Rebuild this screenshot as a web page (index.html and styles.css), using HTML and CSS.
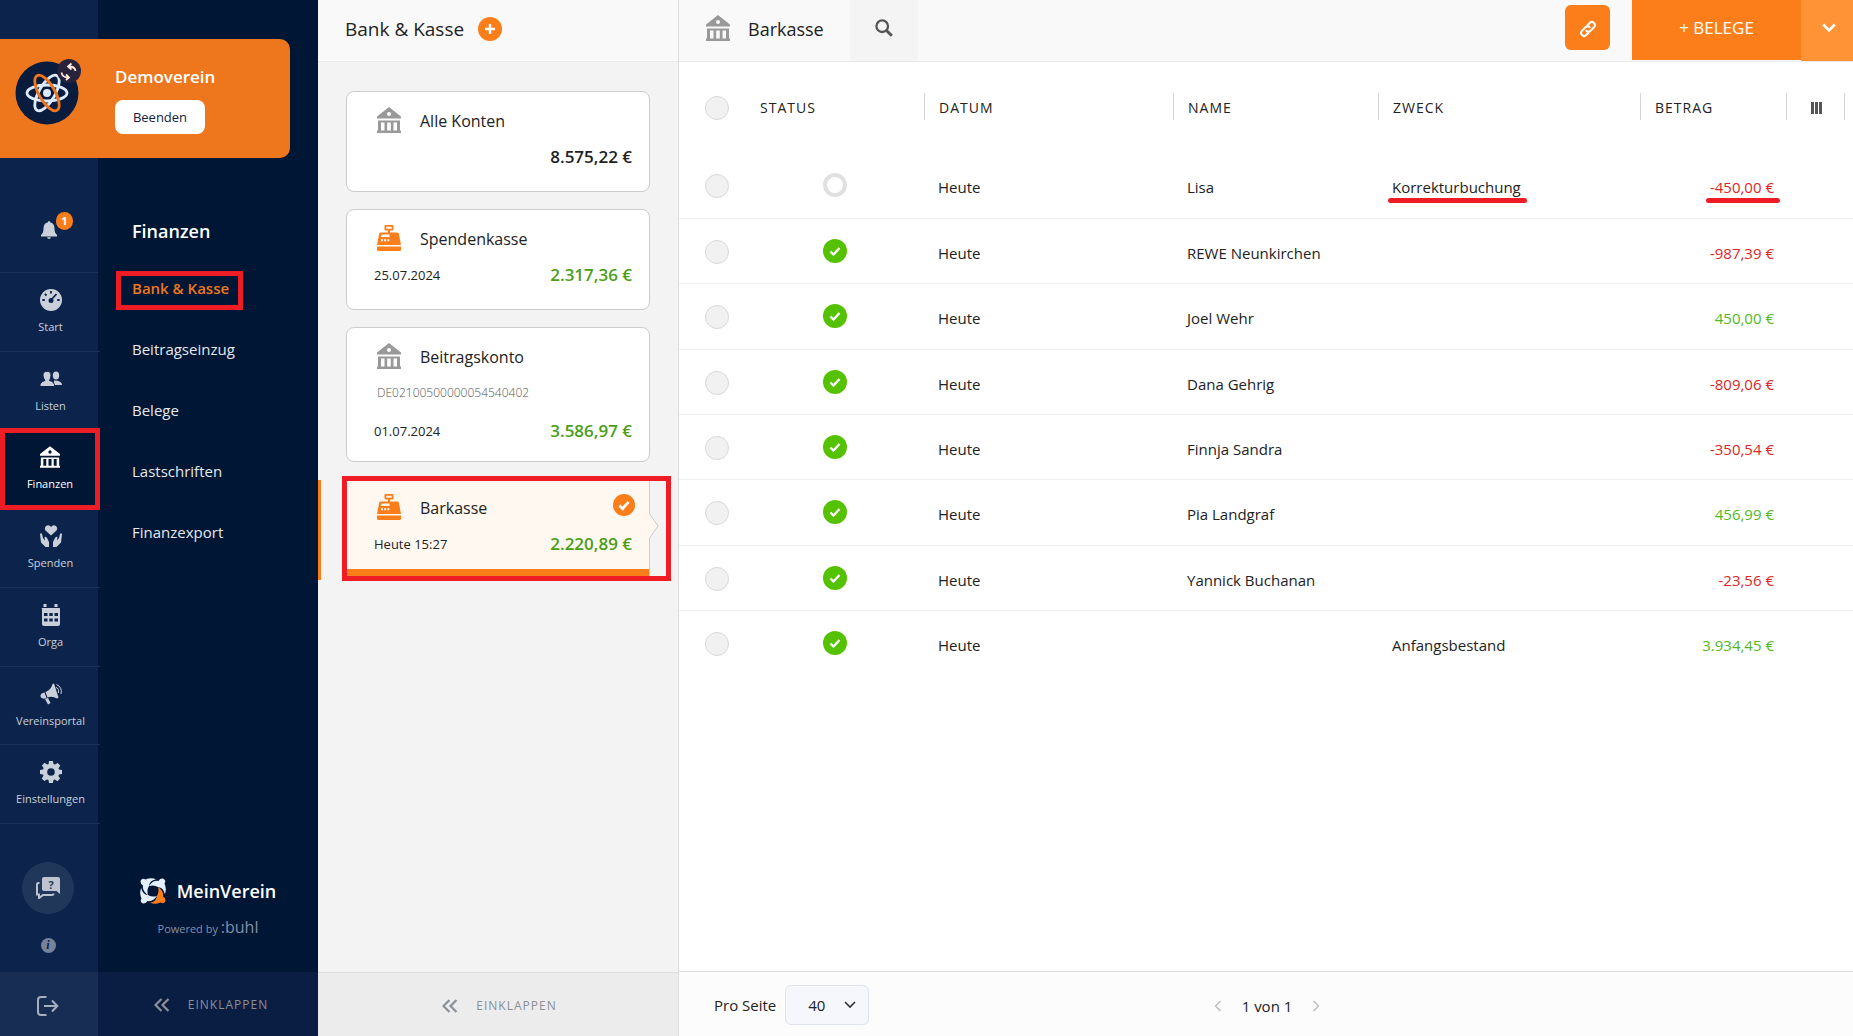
FILE: index.html
```html
<!DOCTYPE html>
<html lang="de">
<head>
<meta charset="utf-8">
<title>MeinVerein – Bank &amp; Kasse</title>
<link rel="stylesheet" href="styles.css">
</head>
<body>
<svg class="sprite" aria-hidden="true">
  <symbol id="bank" viewBox="0 0 24 26">
    <path fill-rule="evenodd" d="M12 0 24 9.500V11.500H0V9.500ZM12 5A2 2 0 1 0 12 9A2 2 0 1 0 12 5Z"/>
    <path d="M1 13.500H23V15.500H1ZM1 15H4V24H1ZM7.500 15H10.200V24H7.500ZM13.800 15H16.500V24H13.800ZM20 15H23V24H20ZM0 23.500H24V26H0Z"/>
  </symbol>
  <symbol id="register" viewBox="0 0 24 26">
    <path fill-rule="evenodd" d="M8.500 0H15.500Q16.500 0 16.500 1V4.500Q16.500 5.500 15.500 5.500H13V7.500H20.500Q21.500 7.500 21.800 8.500L24 20H0L2.200 8.500Q2.500 7.500 3.500 7.500H11V5.500H8.500Q7.500 5.500 7.500 4.500V1Q7.500 0 8.500 0ZM9.300 1.700V3.800H14.700V1.700ZM4.500 9.500 4 12H12.500V9.500ZM4 14.300V16.300H6V14.300ZM7.200 14.300V16.300H9.200V14.300ZM10.400 14.300V16.300H12.400V14.300Z"/>
    <path d="M0 21.500H24V24.500Q24 26 22.500 26H1.500Q0 26 0 24.500Z"/>
  </symbol>
  <symbol id="check" viewBox="0 0 24 24">
    <circle cx="12" cy="12" r="12"/>
    <path d="M7 12.500 10.500 16 17 8.500" fill="none" stroke="#fff" stroke-width="3"/>
  </symbol>
  <symbol id="ok" viewBox="0 0 24 24">
    <circle cx="12" cy="12" r="12"/>
    <path d="M7.500 12.500 10.500 15.500 16.500 9" fill="none" stroke="#fff" stroke-width="2.400"/>
  </symbol>
  <symbol id="collapse" viewBox="0 0 16 14">
    <path d="M7.500 1 1.500 7 7.500 13M14.500 1 8.500 7 14.500 13" fill="none" stroke="currentColor" stroke-width="2.200"/>
  </symbol>
</svg>

<div class="app">
  <aside class="sidebar">
    <div class="club">
      <div class="club-logo">
        <svg viewBox="0 0 64 64" width="64" height="64">
          <circle cx="32" cy="32" r="31.500" fill="#0a1c3e"/>
          <g fill="none" stroke-width="2.800">
            <ellipse cx="32" cy="32" rx="8" ry="20" transform="rotate(30 32 32)" stroke="#dcebff"/>
            <ellipse cx="32" cy="32" rx="20" ry="8" stroke="#dcebff"/>
            <ellipse cx="32" cy="32" rx="8" ry="20" transform="rotate(-30 32 32)" stroke="#ee761c"/>
          </g>
          <circle cx="32" cy="32" r="4" fill="#dcebff"/>
        </svg>
        <svg class="swap" viewBox="0 0 24 24" width="24" height="24">
          <circle cx="12" cy="12" r="12" fill="#26233a"/>
          <path d="M18.500 12Q18 7.500 12 7.500M14.500 4.500 11 7.500 14.500 10.500M4.500 13.500Q5 18.500 11.500 18.500M9 15.500 12 18.500 9 21" fill="none" stroke="#ffe9dc" stroke-width="1.800"/>
        </svg>
      </div>
      <div class="club-info">
        <strong>Demoverein</strong>
        <button type="button">Beenden</button>
      </div>
    </div>

    <nav class="rail" aria-label="Hauptnavigation">
      <a class="bell" href="#" aria-label="Benachrichtigungen">
        <svg viewBox="0 0 18 18" width="18" height="18"><path d="M9 0Q10 0 10 1.200Q14.500 2.200 14.500 7.500Q14.500 12 17 14V15.500H1V14Q3.500 12 3.500 7.500Q3.500 2.200 8 1.200Q8 0 9 0ZM7 16.300H11Q10.500 18 9 18Q7.500 18 7 16.300Z"/></svg>
        <span class="badge">1</span>
      </a>
      <div class="rail-items">
        <a href="#"><svg viewBox="0 0 22 22" width="22" height="22"><circle cx="11" cy="11" r="11"/><g stroke="#0c244b" stroke-width="1.800"><path d="M11 11 16.500 5M11 2V4.500M4.800 4.800 6.500 6.500M2.300 11H4.800M17.200 11H19.700"/><circle cx="11" cy="11.500" r="1.600" fill="#0c244b"/></g></svg>Start</a>
        <a href="#"><svg viewBox="0 0 22 22" width="22" height="22"><ellipse cx="16" cy="7.500" rx="3.200" ry="4"/><path d="M14 12.500Q22 12.500 22 17H14Z"/><g stroke="#0c244b" stroke-width="1"><path d="M0 18.500Q-.5 14 5 12.500Q3 10 3 7.500Q3 3.300 7 3.300Q11 3.300 11 7.500Q11 10 9.500 12.500Q15 14 14.500 18.500Z"/></g></svg>Listen</a>
        <a href="#" class="active"><svg width="20" height="22"><use href="#bank"/></svg>Finanzen</a>
        <a href="#"><svg viewBox="0 0 22 22" width="22" height="22"><path d="M11 10.500 5.500 5.500Q4 3 6 1Q9-1 11 2Q13-1 16 1Q18 3 16.500 5.500ZM0 9Q1 7.500 2 9L3 13 5 15.500 4.500 12.500Q5.500 11 7 13L9 17V22H5.500L1 17.500ZM22 9Q21 7.500 20 9L19 13 17 15.500 17.500 12.500Q16.500 11 15 13L13 17V22H16.500L21 17.500Z"/></svg>Spenden</a>
        <a href="#"><svg viewBox="0 0 22 22" width="22" height="22"><path fill-rule="evenodd" d="M3.500 0H6.500V3H3.500ZM14.500 0H17.500V3H14.500ZM1.500 4H19.500Q20 4 20 5V20Q20 22 18 22H4Q2 22 2 20V5ZM4 9V12H7.500V9ZM9.300 9V12H12.700V9ZM14.500 9V12H18V9ZM4 14.500V17.500H7.500V14.500ZM9.300 14.500V17.500H12.700V14.500ZM14.500 14.500V17.500H18V14.500Z"/></svg>Orga</a>
        <a href="#"><svg viewBox="0 0 22 22" width="22" height="22"><path d="M5.500 9Q11 7 12.500 1L14 .5 18.500 14.500 17 15.500Q12 12.500 7.500 14.500ZM4.500 9.500 6.500 15Q3 16.500 1 14.500Q-1 11 4.500 9.500ZM5 16 8 15 10.500 20 8 21.500Z"/><path d="M16 4.500Q19 5 18.500 10M16.500 1.500Q22.500 4 21 11" fill="none" stroke="#c9d0da" stroke-width="1"/></svg>Vereinsportal</a>
        <a href="#"><svg viewBox="0 0 22 22" width="22" height="22"><path fill-rule="evenodd" d="M9 0H13L13.500 3 15 3.600 17.600 1.900 20.300 4.600 18.500 7.200 19 8.600 22 9V13L19 13.500 18.400 15 20.100 17.600 17.400 20.300 14.800 18.500 13.400 19 13 22H9L8.500 19 7 18.400 4.400 20.100 1.700 17.400 3.500 14.800 3 13.400 0 13V9L3 8.500 3.600 7 1.900 4.400 4.600 1.700 7.200 3.500 8.600 3ZM11 7.200A3.800 3.800 0 1 0 11 14.800A3.800 3.800 0 1 0 11 7.200Z"/></svg>Einstellungen</a>
      </div>
      <div class="rail-help">
        <a class="chat" href="#" aria-label="Hilfe"><svg viewBox="0 0 24 22" width="24" height="22"><path d="M8 0H22Q24 0 24 2V17L20.500 14H8Q6 14 6 12V2Q6 0 8 0Z"/><path d="M3.500 6H2.500Q1 6 1 7.500V17.500H3V21L7 18H15.500Q17.500 18 17.500 16.500" fill="none" stroke="#bcc4d2" stroke-width="2"/><text x="15" y="12" text-anchor="middle" class="q">?</text></svg></a>
        <a class="info" href="#" aria-label="Info"><span>i</span></a>
      </div>
      <a class="logout" href="#" aria-label="Abmelden"><svg viewBox="0 0 22 20" width="22" height="20"><path d="M9.500 1H4Q1 1 1 4V16Q1 19 4 19H9.500M7 10H20M15 4.500 20.300 10 15 15.500" fill="none" stroke="#a6afbd" stroke-width="2"/></svg></a>
    </nav>

    <nav class="subnav" aria-label="Finanzen">
      <h2>Finanzen</h2>
      <a href="#" class="current">Bank &amp; Kasse</a>
      <a href="#">Beitragseinzug</a>
      <a href="#">Belege</a>
      <a href="#">Lastschriften</a>
      <a href="#">Finanzexport</a>
      <div class="brand">
        <div class="brand-name">
          <svg viewBox="0 0 26 26" width="26" height="26"><path id="arm" d="M18 9Q24 13 23 18.500Q26 20 25.300 23.500Q23.500 26.500 20.500 24.500Q15 27 10 24.800Q16.500 23.500 17 18Q19.500 14 18 9Z" fill="#fc7e1b"/><g fill="#e4f0ff"><path d="M18 9Q24 13 23 18.500Q26 20 25.300 23.500Q23.500 26.500 20.500 24.500Q15 27 10 24.800Q16.500 23.500 17 18Q19.500 14 18 9Z" transform="rotate(90 13 13)"/><path d="M18 9Q24 13 23 18.500Q26 20 25.300 23.500Q23.500 26.500 20.500 24.500Q15 27 10 24.800Q16.500 23.500 17 18Q19.500 14 18 9Z" transform="rotate(180 13 13)"/><path d="M18 9Q24 13 23 18.500Q26 20 25.300 23.500Q23.500 26.500 20.500 24.500Q15 27 10 24.800Q16.500 23.500 17 18Q19.500 14 18 9Z" transform="rotate(270 13 13)"/></g></svg>
          <span>MeinVerein</span>
        </div>
        <div class="powered">Powered by <span>:buhl</span></div>
      </div>
      <button type="button" class="collapse"><svg width="16" height="14"><use href="#collapse"/></svg>EINKLAPPEN</button>
    </nav>
  </aside>

  <section class="accounts">
    <header class="bar">
      <h1>Bank &amp; Kasse</h1>
      <button type="button" class="add" aria-label="Konto hinzufügen"><svg viewBox="0 0 24 24" width="24" height="24"><circle cx="12" cy="12" r="12" fill="#fc7e1b"/><path d="M12 7V17M7 12H17" stroke="#fff" stroke-width="2.400"/></svg></button>
    </header>
    <div class="cards">
      <article class="card">
        <div class="card-head"><svg class="grey" width="24" height="26"><use href="#bank"/></svg><h3>Alle Konten</h3></div>
        <div class="card-foot"><span></span><b>8.575,22 €</b></div>
      </article>
      <article class="card">
        <div class="card-head"><svg class="orange" width="24" height="26"><use href="#register"/></svg><h3>Spendenkasse</h3></div>
        <div class="card-foot"><span>25.07.2024</span><b class="plus">2.317,36 €</b></div>
      </article>
      <article class="card with-iban">
        <div class="card-head"><svg class="grey" width="24" height="26"><use href="#bank"/></svg><h3>Beitragskonto</h3></div>
        <div class="iban">DE02100500000054540402</div>
        <div class="card-foot"><span>01.07.2024</span><b class="plus">3.586,97 €</b></div>
      </article>
      <article class="card selected">
        <div class="card-head"><svg class="orange" width="24" height="26"><use href="#register"/></svg><h3>Barkasse</h3><svg class="orange tick" width="22" height="22"><use href="#check"/></svg></div>
        <div class="card-foot"><span>Heute 15:27</span><b class="plus">2.220,89 €</b></div>
        <svg class="pointer" viewBox="0 0 10 26" width="10" height="26"><path d="M0 0 9 13 0 26" fill="#fff8f1" stroke="#ccc"/></svg>
      </article>
    </div>
    <button type="button" class="collapse"><svg width="16" height="14"><use href="#collapse"/></svg>EINKLAPPEN</button>
  </section>

  <main class="bookings">
    <header class="bar">
      <svg class="grey" width="24" height="26"><use href="#bank"/></svg>
      <h2>Barkasse</h2>
      <button type="button" class="search" aria-label="Suchen"><svg viewBox="0 0 18 18" width="18" height="18"><circle cx="7.200" cy="7.200" r="5.800" fill="none" stroke="#555" stroke-width="2.300"/><path d="M11.500 11.500 16.800 16.800" stroke="#555" stroke-width="3"/></svg></button>
      <button type="button" class="link" aria-label="Verknüpfen"><svg viewBox="0 0 20 20" width="20" height="20"><g transform="rotate(-45 10 10)" fill="none" stroke="#fff" stroke-width="2" stroke-linecap="round"><path d="M8 13H4.500A3 3 0 0 1 4.500 7H10A3 3 0 0 1 12.500 10"/><path d="M12 7H15.500A3 3 0 0 1 15.500 13H10A3 3 0 0 1 7.500 10"/></g></svg></button>
      <button type="button" class="belege">+ BELEGE</button>
      <button type="button" class="more" aria-label="Weitere Aktionen"><svg viewBox="0 0 14 10" width="14" height="10"><path d="M1.200 1.500 7 7.500 12.800 1.500" fill="none" stroke="#fff" stroke-width="2.600"/></svg></button>
    </header>

    <div class="table-area">
      <table>
        <colgroup><col class="c-pick"><col class="c-status"><col class="c-date"><col class="c-name"><col class="c-use"><col class="c-sum"><col class="c-cols"><col class="c-end"></colgroup>
        <thead>
          <tr><th><input type="checkbox" aria-label="Alle auswählen"></th><th>STATUS</th><th>DATUM</th><th>NAME</th><th>ZWECK</th><th>BETRAG</th><th><button type="button" class="cols" aria-label="Spalten"><svg viewBox="0 0 11 12" width="11" height="12"><path d="M0 0H3V12H0ZM4 0H7V12H4ZM8 0H11V12H8Z" fill="#555"/></svg></button></th><th></th></tr>
        </thead>
        <tbody>
          <tr><td><input type="checkbox" aria-label="Lisa"></td><td><svg class="open" viewBox="0 0 24 24" width="24" height="24"><circle cx="12" cy="12" r="10"/></svg></td><td>Heute</td><td>Lisa</td><td><span class="mark">Korrekturbuchung</span></td><td class="minus"><span class="mark">-450,00 €</span></td><td></td><td></td></tr>
          <tr><td><input type="checkbox" aria-label="REWE Neunkirchen"></td><td><svg class="ok" width="24" height="24"><use href="#ok"/></svg></td><td>Heute</td><td>REWE Neunkirchen</td><td></td><td class="minus">-987,39 €</td><td></td><td></td></tr>
          <tr><td><input type="checkbox" aria-label="Joel Wehr"></td><td><svg class="ok" width="24" height="24"><use href="#ok"/></svg></td><td>Heute</td><td>Joel Wehr</td><td></td><td class="gain">450,00 €</td><td></td><td></td></tr>
          <tr><td><input type="checkbox" aria-label="Dana Gehrig"></td><td><svg class="ok" width="24" height="24"><use href="#ok"/></svg></td><td>Heute</td><td>Dana Gehrig</td><td></td><td class="minus">-809,06 €</td><td></td><td></td></tr>
          <tr><td><input type="checkbox" aria-label="Finnja Sandra"></td><td><svg class="ok" width="24" height="24"><use href="#ok"/></svg></td><td>Heute</td><td>Finnja Sandra</td><td></td><td class="minus">-350,54 €</td><td></td><td></td></tr>
          <tr><td><input type="checkbox" aria-label="Pia Landgraf"></td><td><svg class="ok" width="24" height="24"><use href="#ok"/></svg></td><td>Heute</td><td>Pia Landgraf</td><td></td><td class="gain">456,99 €</td><td></td><td></td></tr>
          <tr><td><input type="checkbox" aria-label="Yannick Buchanan"></td><td><svg class="ok" width="24" height="24"><use href="#ok"/></svg></td><td>Heute</td><td>Yannick Buchanan</td><td></td><td class="minus">-23,56 €</td><td></td><td></td></tr>
          <tr><td><input type="checkbox" aria-label="Anfangsbestand"></td><td><svg class="ok" width="24" height="24"><use href="#ok"/></svg></td><td>Heute</td><td></td><td>Anfangsbestand</td><td class="gain">3.934,45 €</td><td></td><td></td></tr>
        </tbody>
      </table>
    </div>

    <footer class="pager">
      <div class="per-page">
        <label for="size">Pro Seite</label>
        <div class="select"><select id="size"><option>40</option></select><svg viewBox="0 0 12 8" width="12" height="8"><path d="M1 1 6 6 11 1" fill="none" stroke="#333" stroke-width="1.600"/></svg></div>
      </div>
      <div class="pages">
        <button type="button" aria-label="Zurück"><svg viewBox="0 0 8 12" width="8" height="12"><path d="M6.500 1 1.500 6 6.500 11" fill="none" stroke="#bbb" stroke-width="1.400"/></svg></button>
        <span>1 von 1</span>
        <button type="button" aria-label="Weiter"><svg viewBox="0 0 8 12" width="8" height="12"><path d="M1.500 1 6.500 6 1.500 11" fill="none" stroke="#bbb" stroke-width="1.400"/></svg></button>
      </div>
      <span></span>
    </footer>
  </main>
</div>
</body>
</html>
```
FILE: styles.css
```css
* { box-sizing: border-box; }

body {
  margin: 0;
  font-family: "Open Sans", "Noto Sans", sans-serif;
  font-size: 15px;
  line-height: 20px;
  color: #222;
}

h1, h2, h3 { margin: 0; font-weight: 500; }
a { color: inherit; text-decoration: none; }
button { font: inherit; color: inherit; border: 0; padding: 0; background: none; cursor: pointer; }
svg { display: block; flex: none; fill: currentColor; }
.sprite { position: absolute; width: 0; height: 0; }
.grey { color: #999; }
.orange { color: #fc7e1b; }

.app {
  display: grid;
  grid-template-columns: 318px 361px minmax(0, 1fr);
  min-height: 100vh;
}

/* Sidebar */
.sidebar {
  position: relative;
  display: grid;
  grid-template-columns: 98px 1fr;
  color: #e6e8ec;
  background: #001635;
}

.club {
  position: absolute;
  top: 39px;
  left: 0;
  display: flex;
  gap: 36px;
  width: 290px;
  height: 119px;
  padding: 22px 15px;
  border-radius: 0 10px 10px 0;
  background: #ee761c;
}
.club-logo { position: relative; }
.swap { position: absolute; top: -2px; left: 42px; }
.club-info { display: flex; flex-direction: column; align-items: flex-start; gap: 13px; padding-top: 5px; }
.club strong { font-size: 17px; line-height: 21px; font-weight: 600; color: #fff; }
.club button {
  width: 90px;
  height: 34px;
  border-radius: 8px;
  background: #fff;
  color: #14213c;
  font-size: 13px;
  font-weight: 500;
}

.rail { display: flex; flex-direction: column; background: #0c244b; color: #c9d0da; }
.bell {
  position: relative;
  display: flex;
  align-items: flex-end;
  justify-content: center;
  height: 273px;
  padding-bottom: 33px;
  border-bottom: 1px solid #1a3258;
}
.badge {
  position: absolute;
  left: 56px;
  top: 212px;
  width: 17px;
  height: 18px;
  border-radius: 9px;
  background: #fc7e1b;
  color: #fff;
  font-size: 11px;
  line-height: 18px;
  font-weight: 700;
  text-align: center;
}
.rail-items { display: grid; grid-auto-rows: 1fr; height: 551px; }
.rail-items a {
  display: flex;
  flex-direction: column;
  align-items: center;
  gap: 8px;
  padding: 16px 0 0 1px;
  border-bottom: 1px solid #1a3258;
  font-size: 11px;
  line-height: 16px;
}
.rail-items .active {
  width: 100px;
  margin-top: -2px;
  margin-bottom: -1px;
  padding: 13px 0 0;
  border: 5px solid #ee1c24;
  background: #001635;
  color: #fff;
  z-index: 1;
}
.rail-help { display: flex; flex-direction: column; align-items: center; gap: 24px; margin-top: auto; padding: 0 2px 19px 0; }
.chat { display: flex; align-items: center; justify-content: center; width: 52px; height: 52px; border-radius: 50%; background: #21375a; color: #bcc4d2; }
.q { font-size: 11px; font-weight: 700; fill: #21375a; }
.info { width: 15px; height: 15px; border-radius: 50%; background: #75839b; color: #0c244b; font: italic 700 12px/15px "Liberation Serif", serif; text-align: center; }
.logout { display: flex; align-items: center; justify-content: center; height: 64px; padding: 3px 2px 0 0; background: #182d54; }

.subnav { display: flex; flex-direction: column; padding-top: 220px; font-size: 15px; }
.subnav h2 { margin: 0 0 29px 34px; font-size: 18px; line-height: 22px; font-weight: 600; color: #fff; }
.subnav > a { align-self: flex-start; margin: 0 18px 22px; padding: 3px 9px 7px 11px; border: 5px solid transparent; line-height: 19px; font-weight: 500; }
.subnav > .current { border-color: #ee1c24; color: #ee761c; font-weight: 600; }
.brand { margin: auto 0 33px; display: flex; flex-direction: column; align-items: center; gap: 12px; }
.brand-name { display: flex; align-items: center; gap: 11px; color: #fff; font-size: 18px; line-height: 28px; font-weight: 600; }
.powered { font-size: 11px; line-height: 20px; color: #8390a8; }
.powered span { font-size: 16px; font-weight: 400; }
.collapse {
  display: flex;
  align-items: center;
  justify-content: center;
  gap: 18px;
  height: 64px;
  padding: 2px 0 0 3px;
  font-size: 12px;
  letter-spacing: 1px;
  color: #8a8f98;
}
.subnav .collapse { background: #0a1d43; padding-left: 6px; }

/* Account list */
.accounts { display: flex; flex-direction: column; border-right: 1px solid #ddd; background: #f3f3f3; }
.bar { display: flex; align-items: center; height: 62px; border-bottom: 1px solid #eaeaea; background: #f9f9f9; }
.bar h1 { font-size: 19px; }
.bar h2 { font-size: 18px; }
.accounts .bar { gap: 14px; padding: 0 27px 4px; }
.cards { display: flex; flex-direction: column; gap: 17px; padding: 29px 0; }
.card {
  position: relative;
  width: 304px;
  margin-left: 28px;
  padding: 15px 17px 22px 27px;
  border: 1px solid #ccc;
  border-radius: 8px;
  background: #fff;
}
.card-head { display: flex; gap: 19px; padding-left: 3px; height: 26px; align-items: center; }
.card h3 { font-size: 16px; line-height: 26px; padding-top: 2px; }
.card-foot { display: flex; align-items: center; justify-content: space-between; padding-top: 11px; height: 36px; font-size: 13px; }
.card b { font-size: 17px; font-weight: 600; }
.card .plus { color: #4a9e17; }
.iban { height: 38px; padding: 14px 3px 0; font-size: 12px; font-weight: 300; color: #555; }
.with-iban { padding-bottom: 18px; }
.selected {
  width: 329px;
  margin: -3px 0 0 24px;
  padding: 13px 34px 20px 27px;
  border: 5px solid #ee1c24;
  border-radius: 0;
  background: linear-gradient(90deg, #fff8f1 303px, transparent 303px);
}
.selected::before { content: ""; position: absolute; top: 0; bottom: 0; left: 0; width: 302px; border: solid #fc7e1b; border-width: 0 0 7px; box-shadow: 1px 0 0 #ccc; }
.selected::after { content: ""; position: absolute; top: -1px; bottom: -4px; left: -29px; width: 3px; background: #fc7e1b; }
.tick { margin: 0 -3px 4px auto; }
.pointer { position: absolute; left: 302px; top: 32px; }
.accounts .collapse { margin-top: auto; border-top: 1px solid #ddd; background: #ececec; }

/* Bookings */
.bookings { display: flex; flex-direction: column; min-width: 0; background: #fff; }
.bookings .bar { padding-left: 27px; }
.bookings .bar > .grey { margin-bottom: 6px; }
.bookings h2 { margin: 0 26px 3px 18px; }
.search { display: flex; align-items: center; justify-content: center; width: 68px; height: 61px; padding-bottom: 5px; background: #f4f4f4; }
.link { display: flex; align-items: center; justify-content: center; width: 45px; height: 45px; margin: 0 22px 6px auto; padding-top: 3px; border-radius: 6px; background: #fc7e1b; }
.belege { width: 169px; height: 60px; margin-bottom: 1px; padding-bottom: 5px; background: #fc7e1b; color: #fff; font-size: 17px; }
.more { display: flex; align-items: center; justify-content: center; width: 52px; height: 61px; padding: 0 0 6px 3px; background: #ff9335; }

.table-area { flex: 1; }
table { width: 100%; border-collapse: collapse; table-layout: fixed; }
.c-pick { width: 66px; }
.c-status { width: 179px; }
.c-date { width: 249px; }
.c-name { width: 205px; }
.c-sum { width: 146px; }
.c-cols { width: 58px; }
.c-end { width: 9px; }
th {
  height: 91px;
  padding: 0 0 0 15px;
  text-align: left;
  font-size: 14px;
  font-weight: 500;
  letter-spacing: 1px;
  background: linear-gradient(#d4d4d4, #d4d4d4) 0 31px / 1px 27px no-repeat;
}
th:nth-child(-n+2) { background: none; }
td { height: 65px; padding: 4px 0 0 14px; border-bottom: 1px solid #eee; white-space: nowrap; font-size: 15px; }
tr:nth-child(3n) td { height: 66px; }
tr:last-child td { border: 0; }
th:first-child { padding: 0 0 0 26px; }
td:first-child { padding: 2px 0 0 26px; }
td:nth-child(2) { padding: 0 0 0 78px; }
td:nth-child(6) { padding-right: 12px; text-align: right; font-weight: 500; }
th:nth-child(7) { padding: 3px 0 0 25px; }
input[type="checkbox"] { appearance: none; display: block; width: 24px; height: 24px; margin: 0; border: 1px solid #d8d8d8; border-radius: 50%; background: #f1f1f1; }
.open circle { fill: none; stroke: #e0e0e0; stroke-width: 4px; }
.ok { color: #54c200; }
.minus { color: #dc2626; }
.gain { color: #54b81c; }
.mark { position: relative; }
.mark::after { content: ""; position: absolute; left: -4px; right: -6px; bottom: -6px; height: 5px; border-radius: 3px; background: #ee1c24; }

.pager { display: grid; grid-template-columns: 1fr auto 1fr; align-items: center; height: 65px; padding: 2px 33px 0 35px; border-top: 1px solid #ddd; background: #fcfcfc; }
.per-page { display: flex; align-items: center; gap: 9px; }
.select { position: relative; }
.select select { appearance: none; width: 84px; height: 40px; padding: 0 22px; border: 1px solid #dfe3ef; border-radius: 6px; background: #f5f7fc; color: #222; font: inherit; }
.select svg { position: absolute; right: 13px; top: 16px; pointer-events: none; }
.pages { display: flex; align-items: center; gap: 20px; padding-top: 2px; }
```
